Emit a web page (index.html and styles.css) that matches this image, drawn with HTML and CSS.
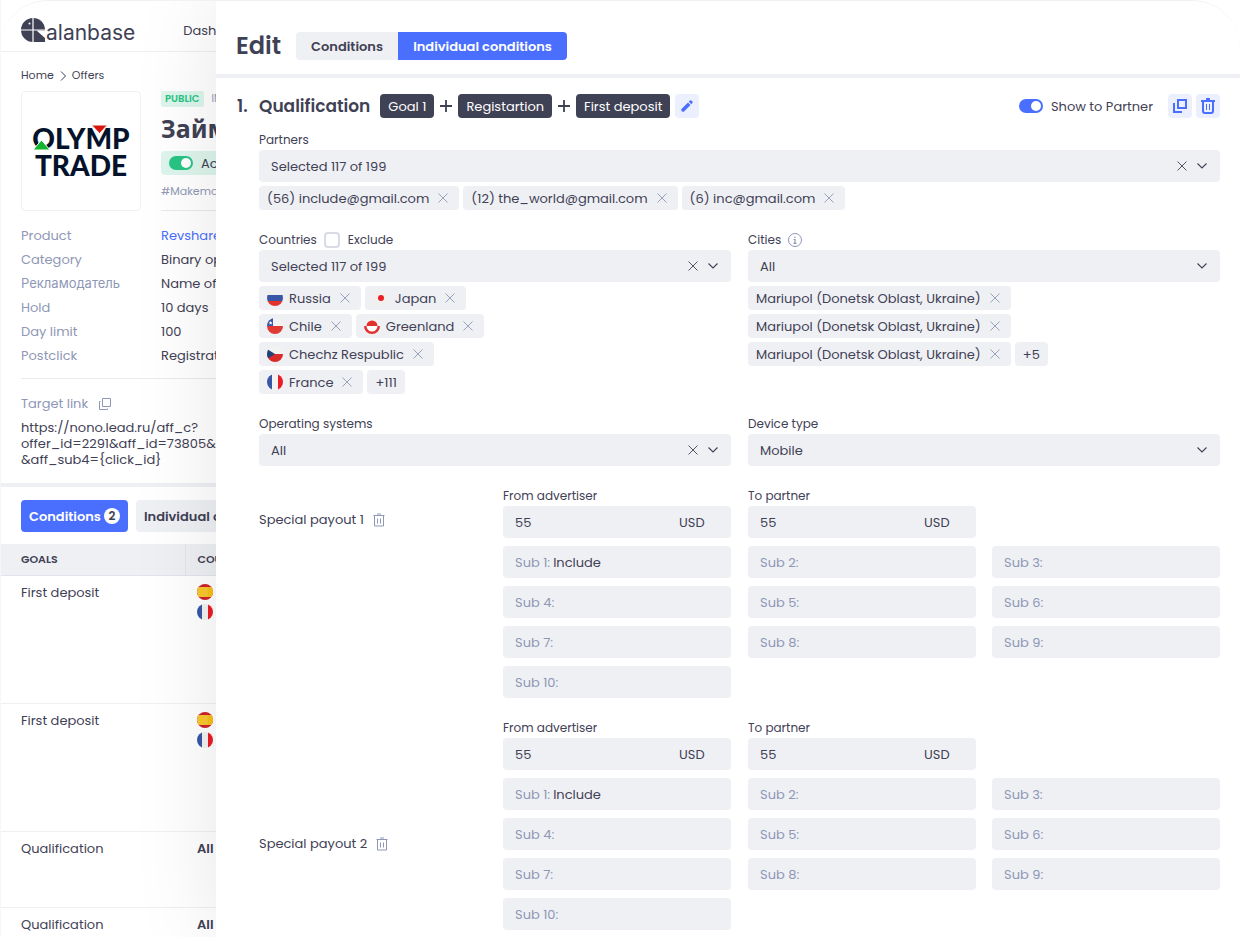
FILE: index.html
```
<!DOCTYPE html>
<html lang="en">
<head>
<meta charset="utf-8">
<title>Alanbase – Edit conditions</title>
<link rel="stylesheet" href="styles.css">
</head>
<body>
<svg class="sprite" aria-hidden="true">
  <symbol id="cross" viewBox="0 0 10 10"><path d="M0.5 0.5 9.5 9.5M9.5 0.5 0.5 9.5" fill="none" stroke="currentColor" stroke-width="0.9"/></symbol>
  <symbol id="chevron" viewBox="0 0 10 6"><path d="M0.5 0.5 5 5 9.5 0.5" fill="none" stroke="currentColor" stroke-width="1.1"/></symbol>
  <symbol id="plus" viewBox="0 0 12 12"><path d="M6 0v12M0 6h12" fill="none" stroke="currentColor" stroke-width="1.8"/></symbol>
  <symbol id="trash" viewBox="0 0 12 14"><path d="M0.5 2.5h11M4 1h4M1.5 3v10h9V3M4.5 5.5v5M7.5 5.5v5" fill="none" stroke="currentColor"/></symbol>
  <symbol id="copy" viewBox="0 0 12 12"><path d="M3.5 0.5h8v8h-8zM1.5 3.500h-1v8h8v-1" fill="none" stroke="currentColor"/></symbol>
  <symbol id="flag-ru" viewBox="0 0 16 16"><path fill="#efefef" d="M0 0h16v5H0z"/><path fill="#3757a6" d="M0 5h16v6H0z"/><path fill="#e4322b" d="M0 11h16v5H0z"/></symbol>
  <symbol id="flag-jp" viewBox="0 0 16 16"><path fill="#f2efef" d="M0 0h16v16H0z"/><circle cx="8" cy="8" r="3" fill="#ec1c24"/></symbol>
  <symbol id="flag-cl" viewBox="0 0 16 16"><path fill="#f2f2f2" d="M0 0h16v8H0z"/><path fill="#3757a6" d="M0 0h6v8H0z"/><path fill="#e03a35" d="M0 8h16v8H0z"/><path fill="#fff" d="m3.6 3 .6 1.2 1.3.2-1 .9.3 1.3-1.2-.6-1.2.6.3-1.3-1-.9 1.3-.2z"/></symbol>
  <symbol id="flag-gl" viewBox="0 0 16 16"><path fill="#f2f2f2" d="M0 0h16v8H0z"/><path fill="#e2312d" d="M0 8h16v8H0zM2.500 8a5.500 5.500 0 0 1 11 0z"/><path fill="#fff" d="M2.500 8a5.500 5.500 0 0 0 11 0z"/></symbol>
  <symbol id="flag-cz" viewBox="0 0 16 16"><path fill="#f2f2f2" d="M0 0h16v8H0z"/><path fill="#d92a28" d="M0 8h16v8H0z"/><path fill="#1d4279" d="M0 3l8 5-8 5z"/></symbol>
  <symbol id="flag-fr" viewBox="0 0 16 16"><path fill="#3757a6" d="M0 0h5v16H0z"/><path fill="#f2f2f2" d="M5 0h6v16H5z"/><path fill="#ec1c24" d="M11 0h5v16h-5z"/></symbol>
  <symbol id="flag-es" viewBox="0 0 16 16"><path fill="#d0202c" d="M0 0h16v16H0z"/><path fill="#f8c82e" d="M0 3h16v10H0z"/><path fill="#f6bf1a" d="M11 3h5v10h-5z"/></symbol>
</svg>

<div class="page">
  <header class="topbar">
    <a class="brand" href="#">
      <svg class="brand-mark" width="24" height="24" viewBox="0 0 24 24" aria-hidden="true">
        <path fill="#3f4155" d="M12 0c6.500 0 11.500 4.500 12 11l0 1.500H15.500L24 20v4H12A12 12 0 0 1 12 0z"/>
        <path stroke="#fff" stroke-width="1.200" d="M12 0v24M0 12h24"/>
        <circle cx="8.500" cy="5.500" r="1" fill="#fff"/>
      </svg>
      <span class="brand-name">alanbase</span>
    </a>
    <nav><a href="#">Dashboard</a></nav>
  </header>

  <main>
    <nav class="crumbs"><a href="#">Home</a>
      <svg width="6" height="10" viewBox="0 0 6 10" aria-hidden="true"><path d="M1 .5 5.500 5 1 9.500" fill="none" stroke="currentColor"/></svg>
      <a href="#">Offers</a></nav>

    <section class="offer">
      <div class="offer-logo">
        <svg width="102" height="60" viewBox="0 0 102 60" role="img" aria-label="Olymp Trade">
          <g class="olymp" text-anchor="middle"><text x="51" y="28">OLYMP</text><text x="51" y="55">TRADE</text></g>
          <path fill="#d8140f" stroke="#fff" stroke-width="1" d="M61.500 4h16l-8 8.500z"/>
          <path fill="#12b52c" stroke="#fff" stroke-width="1" d="M3 29h17l-8.500-10z"/>
        </svg>
      </div>
      <div class="offer-info">
        <div class="offer-tags"><span class="badge">PUBLIC</span><span class="offer-state">IN</span></div>
        <h1 class="offer-title">Займ</h1>
        <label class="status"><input class="switch switch-green" type="checkbox" role="switch" checked>Active</label>
        <p class="hashtag">#Makemoney</p>
      </div>
    </section>

    <dl class="facts">
      <dt>Product</dt><dd><a class="link" href="#">Revshare</a></dd>
      <dt>Category</dt><dd>Binary options</dd>
      <dt>Рекламодатель</dt><dd>Name of advertiser</dd>
      <dt>Hold</dt><dd>10 days</dd>
      <dt>Day limit</dt><dd>100</dd>
      <dt>Postclick</dt><dd>Registration</dd>
    </dl>

    <section class="target">
      <div class="target-head">Target link <button class="bare muted" aria-label="Copy target link"><svg width="12" height="12"><use href="#copy"/></svg></button></div>
      <p class="target-url">https://nono.lead.ru/aff_c?<br>offer_id=2291&amp;aff_id=73805&amp;<br>&amp;aff_sub4={click_id}</p>
    </section>

    <div class="page-tabs">
      <button class="page-tab active">Conditions <span class="count">2</span></button>
      <button class="page-tab">Individual conditions</button>
    </div>

    <table class="goals">
      <thead><tr><th class="col-goal">GOALS</th><th>COUNTRIES</th></tr></thead>
      <tbody>
        <tr class="tall"><td>First deposit</td><td><div class="flags"><svg class="flag"><use href="#flag-es"/></svg><svg class="flag"><use href="#flag-fr"/></svg></div></td></tr>
        <tr class="tall"><td>First deposit</td><td><div class="flags"><svg class="flag"><use href="#flag-es"/></svg><svg class="flag"><use href="#flag-fr"/></svg></div></td></tr>
        <tr class="short"><td>Qualification</td><td><strong>All</strong></td></tr>
        <tr><td>Qualification</td><td><strong>All</strong></td></tr>
      </tbody>
    </table>
  </main>
</div>

<aside class="drawer" aria-label="Edit">
  <header class="drawer-head">
    <h2>Edit</h2>
    <div class="segments">
      <button class="segment">Conditions</button><button class="segment wide active">Individual conditions</button>
    </div>
  </header>

  <form class="condition">
    <div class="condition-head">
      <h3><span class="number">1.</span>Qualification</h3>
      <div class="goal-list">
        <span class="goal">Goal 1</span><svg width="12" height="12"><use href="#plus"/></svg>
        <span class="goal">Registartion</span><svg width="12" height="12"><use href="#plus"/></svg>
        <span class="goal">First deposit</span>
      </div>
      <button type="button" class="icon-btn" aria-label="Edit goals"><svg width="12" height="12" viewBox="0 0 12 12"><path fill="currentColor" d="M0.300 9.200 7 2.500l2.500 2.500L2.800 11.700Q0 12.400.3 9.200zM7.800 1.700l.9-.9q1-1 2 0l.5.5q1 1 0 2l-.9.900z"/></svg></button>
      <label class="show"><input class="switch" type="checkbox" role="switch" checked>Show to Partner</label>
      <div class="head-actions">
        <button type="button" class="icon-btn" aria-label="Duplicate"><svg width="14" height="14" viewBox="0 0 14 14"><path d="M5 1h8v8H5zM1 4v9h8" fill="none" stroke="currentColor" stroke-width="2"/></svg></button>
        <button type="button" class="icon-btn" aria-label="Delete"><svg width="14" height="16" viewBox="0 0 14 16"><path d="M0 3h14M5 1h4M2 3v10q0 2 2 2h6q2 0 2-2V3" fill="none" stroke="currentColor" stroke-width="2"/><path d="M5.500 6v6M8.500 6v6" stroke="currentColor"/></svg></button>
      </div>
    </div>

    <div class="condition-body">
      <div class="field">
        <div class="field-label"><label for="partners">Partners</label></div>
        <div class="control"><select id="partners"><option>Selected 117 of 199</option></select><button type="button" class="bare" aria-label="Clear partners"><svg width="10" height="10"><use href="#cross"/></svg></button><svg width="10" height="6"><use href="#chevron"/></svg></div>
        <div class="chips">
          <span class="chip">(56) include@gmail.com<button type="button" class="bare muted" aria-label="Remove"><svg width="10" height="10"><use href="#cross"/></svg></button></span>
          <span class="chip">(12) the_world@gmail.com<button type="button" class="bare muted" aria-label="Remove"><svg width="10" height="10"><use href="#cross"/></svg></button></span>
          <span class="chip">(6) inc@gmail.com<button type="button" class="bare muted" aria-label="Remove"><svg width="10" height="10"><use href="#cross"/></svg></button></span>
        </div>
      </div>

      <div class="halves">
        <div class="field">
          <div class="field-label"><label for="countries">Countries</label><label class="exclude"><input class="tick" type="checkbox">Exclude</label></div>
          <div class="control"><select id="countries"><option>Selected 117 of 199</option></select><button type="button" class="bare" aria-label="Clear countries"><svg width="10" height="10"><use href="#cross"/></svg></button><svg width="10" height="6"><use href="#chevron"/></svg></div>
          <div class="chips chips-countries">
            <span class="chip"><span class="country"><svg class="flag"><use href="#flag-ru"/></svg>Russia</span><button type="button" class="bare muted" aria-label="Remove"><svg width="10" height="10"><use href="#cross"/></svg></button></span>
            <span class="chip"><span class="country"><svg class="flag"><use href="#flag-jp"/></svg>Japan</span><button type="button" class="bare muted" aria-label="Remove"><svg width="10" height="10"><use href="#cross"/></svg></button></span>
            <span class="chip"><span class="country"><svg class="flag"><use href="#flag-cl"/></svg>Chile</span><button type="button" class="bare muted" aria-label="Remove"><svg width="10" height="10"><use href="#cross"/></svg></button></span>
            <span class="chip"><span class="country"><svg class="flag"><use href="#flag-gl"/></svg>Greenland</span><button type="button" class="bare muted" aria-label="Remove"><svg width="10" height="10"><use href="#cross"/></svg></button></span>
            <span class="chip"><span class="country"><svg class="flag"><use href="#flag-cz"/></svg>Chechz Respublic</span><button type="button" class="bare muted" aria-label="Remove"><svg width="10" height="10"><use href="#cross"/></svg></button></span>
            <span class="chip"><span class="country"><svg class="flag"><use href="#flag-fr"/></svg>France</span><button type="button" class="bare muted" aria-label="Remove"><svg width="10" height="10"><use href="#cross"/></svg></button></span>
            <span class="chip more">+111</span>
          </div>
        </div>
        <div class="field">
          <div class="field-label"><label for="cities">Cities</label><svg class="info" width="14" height="14" viewBox="0 0 14 14"><circle cx="7" cy="7" r="6.500" fill="none" stroke="currentColor"/><path d="M7 3.500v1.500M5.500 6.500H7v4M5.500 10.300h3" fill="none" stroke="currentColor" stroke-width="1.200"/></svg></div>
          <div class="control"><select id="cities"><option>All</option></select><svg width="10" height="6"><use href="#chevron"/></svg></div>
          <div class="chips chips-cities">
            <span class="chip">Mariupol (Donetsk Oblast, Ukraine)<button type="button" class="bare muted" aria-label="Remove"><svg width="10" height="10"><use href="#cross"/></svg></button></span>
            <span class="chip">Mariupol (Donetsk Oblast, Ukraine)<button type="button" class="bare muted" aria-label="Remove"><svg width="10" height="10"><use href="#cross"/></svg></button></span>
            <span class="chip">Mariupol (Donetsk Oblast, Ukraine)<button type="button" class="bare muted" aria-label="Remove"><svg width="10" height="10"><use href="#cross"/></svg></button></span>
            <span class="chip more">+5</span>
          </div>
        </div>
      </div>

      <div class="halves">
        <div class="field">
          <div class="field-label"><label for="os">Operating systems</label></div>
          <div class="control"><select id="os"><option>All</option></select><button type="button" class="bare" aria-label="Clear operating systems"><svg width="10" height="10"><use href="#cross"/></svg></button><svg width="10" height="6"><use href="#chevron"/></svg></div>
        </div>
        <div class="field">
          <div class="field-label"><label for="device">Device type</label></div>
          <div class="control"><select id="device"><option>Mobile</option></select><svg width="10" height="6"><use href="#chevron"/></svg></div>
        </div>
      </div>

      <div class="halves">
        <div class="pair">
          <div class="payout-name">Special payout 1 <button type="button" class="bare muted" aria-label="Delete special payout 1"><svg width="12" height="14"><use href="#trash"/></svg></button></div>
          <div class="subs">
            <div class="field"><div class="field-label"><label for="from1">From advertiser</label></div>
              <div class="control money"><input id="from1" value="55"><select aria-label="Currency"><option>USD</option></select></div></div>
            <label class="control sub">Sub 1:<input value="Include"></label>
            <label class="control sub">Sub 4:<input></label>
            <label class="control sub">Sub 7:<input></label>
            <label class="control sub">Sub 10:<input></label>
          </div>
        </div>
        <div class="pair sub-grid">
          <div class="field first"><div class="field-label"><label for="to1">To partner</label></div>
            <div class="control money"><input id="to1" value="55"><select aria-label="Currency"><option>USD</option></select></div></div>
          <label class="control sub">Sub 2:<input></label>
          <label class="control sub">Sub 3:<input></label>
          <label class="control sub">Sub 5:<input></label>
          <label class="control sub">Sub 6:<input></label>
          <label class="control sub">Sub 8:<input></label>
          <label class="control sub">Sub 9:<input></label>
        </div>
      </div>

      <div class="halves">
        <div class="pair">
          <div class="payout-name low">Special payout 2 <button type="button" class="bare muted" aria-label="Delete special payout 2"><svg width="12" height="14"><use href="#trash"/></svg></button></div>
          <div class="subs">
            <div class="field"><div class="field-label"><label for="from2">From advertiser</label></div>
              <div class="control money"><input id="from2" value="55"><select aria-label="Currency"><option>USD</option></select></div></div>
            <label class="control sub">Sub 1:<input value="Include"></label>
            <label class="control sub">Sub 4:<input></label>
            <label class="control sub">Sub 7:<input></label>
            <label class="control sub">Sub 10:<input></label>
          </div>
        </div>
        <div class="pair sub-grid">
          <div class="field first"><div class="field-label"><label for="to2">To partner</label></div>
            <div class="control money"><input id="to2" value="55"><select aria-label="Currency"><option>USD</option></select></div></div>
          <label class="control sub">Sub 2:<input></label>
          <label class="control sub">Sub 3:<input></label>
          <label class="control sub">Sub 5:<input></label>
          <label class="control sub">Sub 6:<input></label>
          <label class="control sub">Sub 8:<input></label>
          <label class="control sub">Sub 9:<input></label>
        </div>
      </div>
    </div>
  </form>
</aside>
</body>
</html>
```
FILE: styles.css
```
:root {
  --ink: #3f4155;
  --muted: #8e97b5;
  --field: #eff0f4;
  --line: #eeeff2;
  --blue: #4a6fff;
  --green: #28c585;
}
* { box-sizing: border-box; }
body {
  margin: 0;
  position: relative;
  height: 100vh;
  overflow: hidden;
  background: #fff;
  color: var(--ink);
  font: 400 13px/19px Poppins, Inter, "Noto Sans", sans-serif;
}
/* faint rounded outline along the top of the window */
body::before {
  content: "";
  position: absolute;
  z-index: 2;
  inset: 0 0 auto;
  height: 48px;
  border-top: 1px solid #f2f2f3;
  border-radius: 48px 48px 0 0;
  pointer-events: none;
}
h1, h2, h3, p, dl, dd { margin: 0; }
a { color: inherit; text-decoration: none; }
button, input, select { font: inherit; color: inherit; }
button { cursor: pointer; }
svg { display: block; flex: none; }
.sprite { position: absolute; width: 0; height: 0; }
.bare { display: flex; padding: 0; border: 0; background: none; }
.muted { color: var(--muted); }
.flag { width: 16px; height: 16px; border-radius: 50%; }

/* page */
.page { height: 100%; overflow: hidden; border-left: 1px solid #f6f6f7; }
.topbar {
  display: flex;
  align-items: center;
  gap: 48px;
  height: 52px;
  padding: 9px 20px 0;
  border-bottom: 1px solid var(--line);
}
.brand { display: flex; align-items: center; gap: 1px; }
.brand-name { font: 400 21px/24px Inter, sans-serif; padding-top: 6px; }
.crumbs { display: flex; align-items: center; gap: 6px; padding: 14px 20px 6px; font-size: 11px; }
.offer { display: grid; grid-template-columns: 120px 1fr; gap: 20px; padding: 0 20px; }
.offer-logo {
  display: flex;
  align-items: center;
  justify-content: center;
  height: 120px;
  border: 1px solid #f1f1f3;
  border-radius: 4px;
}
.olymp { font: 900 28px Lato, sans-serif; fill: #04122b; }
.offer-info { border-bottom: 1px solid #e9eaf0; }
.offer-tags { display: flex; align-items: center; gap: 8px; font-size: 10px; line-height: 16px; }
.badge { padding: 0 4px; border-radius: 2px; background: #ddf5ec; color: var(--green); font-weight: 600; }
.offer-state { color: var(--muted); }
.offer-title { padding: 5px 0 7px; font: 700 25px/32px "Noto Sans", sans-serif; }
.status { display: flex; align-items: center; gap: 8px; height: 24px; padding: 0 8px; border-radius: 4px; background: #ddf5ec; }
.hashtag { padding-top: 7px; color: var(--muted); font-size: 11px; }
.switch {
  appearance: none;
  flex: none;
  display: flex;
  justify-content: flex-end;
  width: 24px;
  height: 14px;
  margin: 0;
  padding: 2px;
  border-radius: 7px;
  background: var(--blue);
}
.switch::before { content: ""; width: 10px; height: 10px; border-radius: 50%; background: #fff; }
.switch-green { background: var(--green); }
.facts {
  display: grid;
  grid-template-columns: 140px 1fr;
  margin: 0 20px;
  padding: 13px 0 10px;
  line-height: 24px;
  border-bottom: 1px solid #e9eaf0;
}
.facts dt { color: var(--muted); }
.link { color: var(--blue); }
.target { padding: 15px 20px; border-bottom: 4px solid var(--field); }
.target-head { display: flex; align-items: center; gap: 11px; color: var(--muted); }
.target-url { padding-top: 7px; line-height: 16px; }
.page-tabs { display: flex; gap: 8px; padding: 13px 20px 12px; }
.page-tab {
  display: flex;
  align-items: center;
  gap: 3px;
  height: 32px;
  padding: 0 8px;
  border: 0;
  border-radius: 4px;
  background: var(--field);
  font-weight: 600;
  white-space: nowrap;
}
.page-tab.active, .segment.active { background: var(--blue); color: #fff; }
.count { width: 16px; border-radius: 8px; background: #fff; color: var(--ink); font-size: 12px; line-height: 16px; }
.goals { width: 100%; border-collapse: collapse; table-layout: fixed; line-height: 18px; }
.goals th {
  height: 31px;
  padding: 0 12px;
  background: var(--field);
  border-bottom: 1px solid #e2e4ed;
  font-size: 11px;
  font-weight: 600;
  text-align: left;
}
.goals th + th { border-left: 1px solid #e2e4ed; }
.goals .col-goal { width: 184px; padding-left: 20px; }
.goals td { padding: 8px 12px; border-bottom: 1px solid var(--line); vertical-align: top; }
.goals td:first-child { padding-left: 20px; }
.tall { height: 128px; }
.short { height: 76px; }
.flags { display: flex; flex-direction: column; gap: 4px; }
strong { font-weight: 600; }

/* drawer */
.drawer {
  position: absolute;
  inset: 0 0 0 216px;
  overflow: hidden;
  background: #fff;
  box-shadow: 0 0 80px rgba(0, 0, 0, 0.1);
}
.drawer-head {
  display: flex;
  align-items: center;
  gap: 15px;
  padding: 30px 20px 12px;
  border-bottom: 4px solid var(--field);
}
.drawer-head h2 { font-size: 24px; font-weight: 600; line-height: 32px; }
.segments { display: flex; overflow: hidden; border-radius: 4px; }
.segment { width: 102px; height: 28px; padding: 0; border: 0; font-weight: 600; }
.segment.wide { width: 169px; }
.segment:not(.active) { background: var(--field); }
.condition { padding: 16px 20px 0 21px; }
.condition-head { display: flex; align-items: center; height: 24px; }
h3 { display: flex; padding-right: 10px; font-size: 17px; font-weight: 600; line-height: 24px; }
.number { width: 22px; }
.goal-list { display: flex; align-items: center; gap: 6px; padding-right: 5px; }
.goal { display: flex; align-items: center; height: 24px; padding: 0 8px; border-radius: 4px; background: var(--ink); color: #fff; }
.icon-btn {
  display: flex;
  align-items: center;
  justify-content: center;
  width: 24px;
  height: 24px;
  padding: 0;
  border: 0;
  border-radius: 4px;
  background: #eceffe;
  color: var(--blue);
}
.show { display: flex; align-items: center; gap: 8px; margin-left: auto; padding-right: 15px; }
.head-actions { display: flex; gap: 4px; }
.condition-body { display: grid; grid-template-columns: minmax(0, 1fr); gap: 22px; padding: 14px 0 0 22px; }
.halves { display: grid; grid-template-columns: repeat(2, minmax(0, 1fr)); gap: 17px; }
.pair { display: grid; grid-template-columns: repeat(2, minmax(0, 1fr)); gap: 16px; align-items: start; }
.field-label { display: flex; align-items: center; gap: 7px; height: 16px; margin-bottom: 2px; font-size: 12px; line-height: 16px; }
.exclude { display: flex; align-items: center; gap: 8px; }
.tick { appearance: none; width: 16px; height: 16px; margin: 0; border: 2px solid #d9dbe5; border-radius: 4px; background: #fff; }
.info { color: var(--muted); }
.control {
  display: flex;
  align-items: center;
  gap: 10px;
  height: 32px;
  padding: 0 13px 0 12px;
  border-radius: 4px;
  background: var(--field);
}
.control select, .control input {
  appearance: none;
  flex: 1;
  min-width: 0;
  margin: 0;
  padding: 0;
  border: 0;
  outline: 0;
  background: none;
}
.control input { width: 0; }
.control.money { padding-right: 26px; }
.control.money select { flex: none; }
.control.sub { gap: 3px; color: var(--muted); }
.control.sub input { color: var(--ink); }
.subs { display: grid; grid-template-columns: minmax(0, 1fr); gap: 8px; }
.sub-grid { row-gap: 8px; align-content: start; }
.sub-grid .first { grid-column: 1; }
.sub-grid .first + .sub { grid-column: 1; }
.payout-name { display: flex; align-items: center; gap: 9px; padding-top: 22px; white-space: nowrap; }
.payout-name.low { padding-top: 114px; }
.chips { display: flex; flex-wrap: wrap; gap: 4px; padding-top: 4px; }
.chips-countries { max-width: 240px; }
.chips-cities { max-width: 316px; }
.chip { display: flex; align-items: center; gap: 9px; height: 24px; padding: 0 11px 0 8px; border-radius: 4px; background: var(--field); }
.chip.more { padding: 0 8px; }
.country { display: flex; align-items: center; gap: 6px; }
```
